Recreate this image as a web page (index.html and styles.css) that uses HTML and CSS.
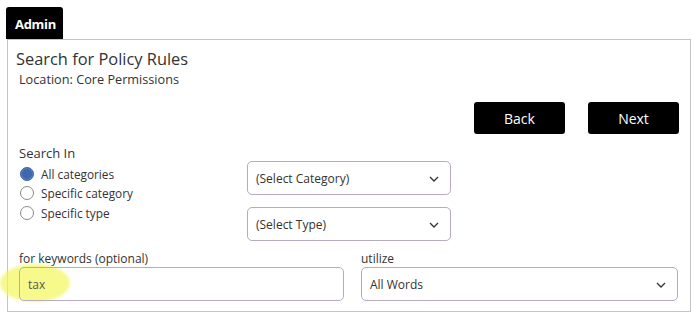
FILE: index.html
```html
<!DOCTYPE html>
<html lang="en">
<head>
    <meta charset="UTF-8">
    <title>Search for Policy Rules</title>
    <link rel="stylesheet" href="styles.css">
</head>
<body>
    <div class="tab">Admin</div>
    <div class="panel">
        <h1 class="title">Search for Policy Rules</h1>
        <div class="location">Location: Core Permissions</div>

        <div class="actions">
            <button class="btn">Back</button>
            <button class="btn">Next</button>
        </div>

        <div class="label search-in">Search In</div>
        <div class="search-grid">
            <div class="radios">
                <div class="radio-row"><span class="radio checked"></span>All categories</div>
                <div class="radio-row"><span class="radio"></span>Specific category</div>
                <div class="radio-row"><span class="radio"></span>Specific type</div>
            </div>
            <div class="selects">
                <div class="select">(Select Category)
                    <svg class="chev" width="10" height="6" viewBox="0 0 10 6"><path d="M1 1l4 4 4-4" fill="none" stroke="#333" stroke-width="1.3"/></svg>
                </div>
                <div class="select">(Select Type)
                    <svg class="chev" width="10" height="6" viewBox="0 0 10 6"><path d="M1 1l4 4 4-4" fill="none" stroke="#333" stroke-width="1.3"/></svg>
                </div>
            </div>
        </div>

        <div class="bottom-row">
            <div class="field keywords">
                <div class="small-label">for keywords (optional)</div>
                <div class="input">tax</div>
                <span class="highlight"></span>
            </div>
            <div class="field">
                <div class="small-label">utilize</div>
                <div class="select">All Words
                    <svg class="chev" width="10" height="6" viewBox="0 0 10 6"><path d="M1 1l4 4 4-4" fill="none" stroke="#333" stroke-width="1.3"/></svg>
                </div>
            </div>
        </div>
    </div>
</body>
</html>
```

FILE: styles.css
```css
*, *::before, *::after {
    box-sizing: border-box;
}
body {
    margin: 0;
    background: white;
    font-family: "Open Sans", "Noto Sans", sans-serif;
    color: #333;
}
.tab {
    margin: 7px 0 0 6px;
    width: 57px;
    height: 32px;
    background: black;
    color: white;
    font-size: 13px;
    font-weight: 700;
    letter-spacing: -0.3px;
    padding: 8px 0 0 9px;
    border-radius: 3px 3px 0 0;
}
.panel {
    margin-left: 7px;
    width: 684px;
    height: 273px;
    border: 1px solid #c4c4c4;
    padding: 0 11px;
}
.title {
    margin: 8px 0 0 -3px;
    font-size: 16.4px;
    font-weight: 400;
    line-height: 22px;
    color: #333;
}
.location {
    font-size: 12.7px;
    line-height: 16px;
    margin-top: 1px;
}
.actions {
    display: flex;
    justify-content: flex-end;
    gap: 23px;
    margin-top: 15px;
}
.btn {
    width: 91px;
    height: 32px;
    background: black;
    color: white;
    border: none;
    border-radius: 3px;
    font-family: inherit;
    font-size: 14px;
    padding: 0;
}
.search-in {
    font-size: 13px;
    margin-top: 10px;
    line-height: 18px;
}
.search-grid {
    display: flex;
    margin-top: -4px;
}
.radios {
    width: 228px;
    padding-top: 6px;
}
.radio-row {
    display: flex;
    align-items: center;
    height: 19.5px;
    font-size: 11.8px;
}
.radio {
    width: 14px;
    height: 14px;
    border: 1px solid #8a8a8a;
    border-radius: 50%;
    margin: 0 7px 0 1px;
    background: white;
}
.radio.checked {
    background: #3e68ab;
    border-color: #3e68ab;
    box-shadow: inset 0 0 0 1px #5b80bd;
}
.selects {
    display: flex;
    flex-direction: column;
    gap: 12px;
    margin-top: 3px;
}
.select {
    position: relative;
    width: 204px;
    height: 34px;
    border: 1px solid #b5abc4;
    border-radius: 5px;
    font-size: 12px;
    display: flex;
    align-items: center;
    padding-left: 8px;
    color: #333;
}
.chev {
    position: absolute;
    right: 11px;
    top: 14px;
}
.bottom-row {
    display: flex;
    gap: 17px;
    margin-top: 10px;
}
.field {
    position: relative;
}
.small-label {
    font-size: 12px;
    line-height: 15px;
    margin-bottom: 1px;
    color: #333;
}
.input {
    position: relative;
    z-index: 1;
    width: 325px;
    height: 34px;
    border: 1px solid #b5abc4;
    border-radius: 5px;
    font-size: 12px;
    display: flex;
    align-items: center;
    padding-left: 8px;
    color: #5a5a4a;
}
.field .select {
    width: 317px;
}
.highlight {
    position: absolute;
    left: -19px;
    top: 13px;
    width: 70px;
    height: 38px;
    border-radius: 50%;
    background: rgba(244, 247, 90, 0.7);
    filter: blur(1.5px);
}
```
